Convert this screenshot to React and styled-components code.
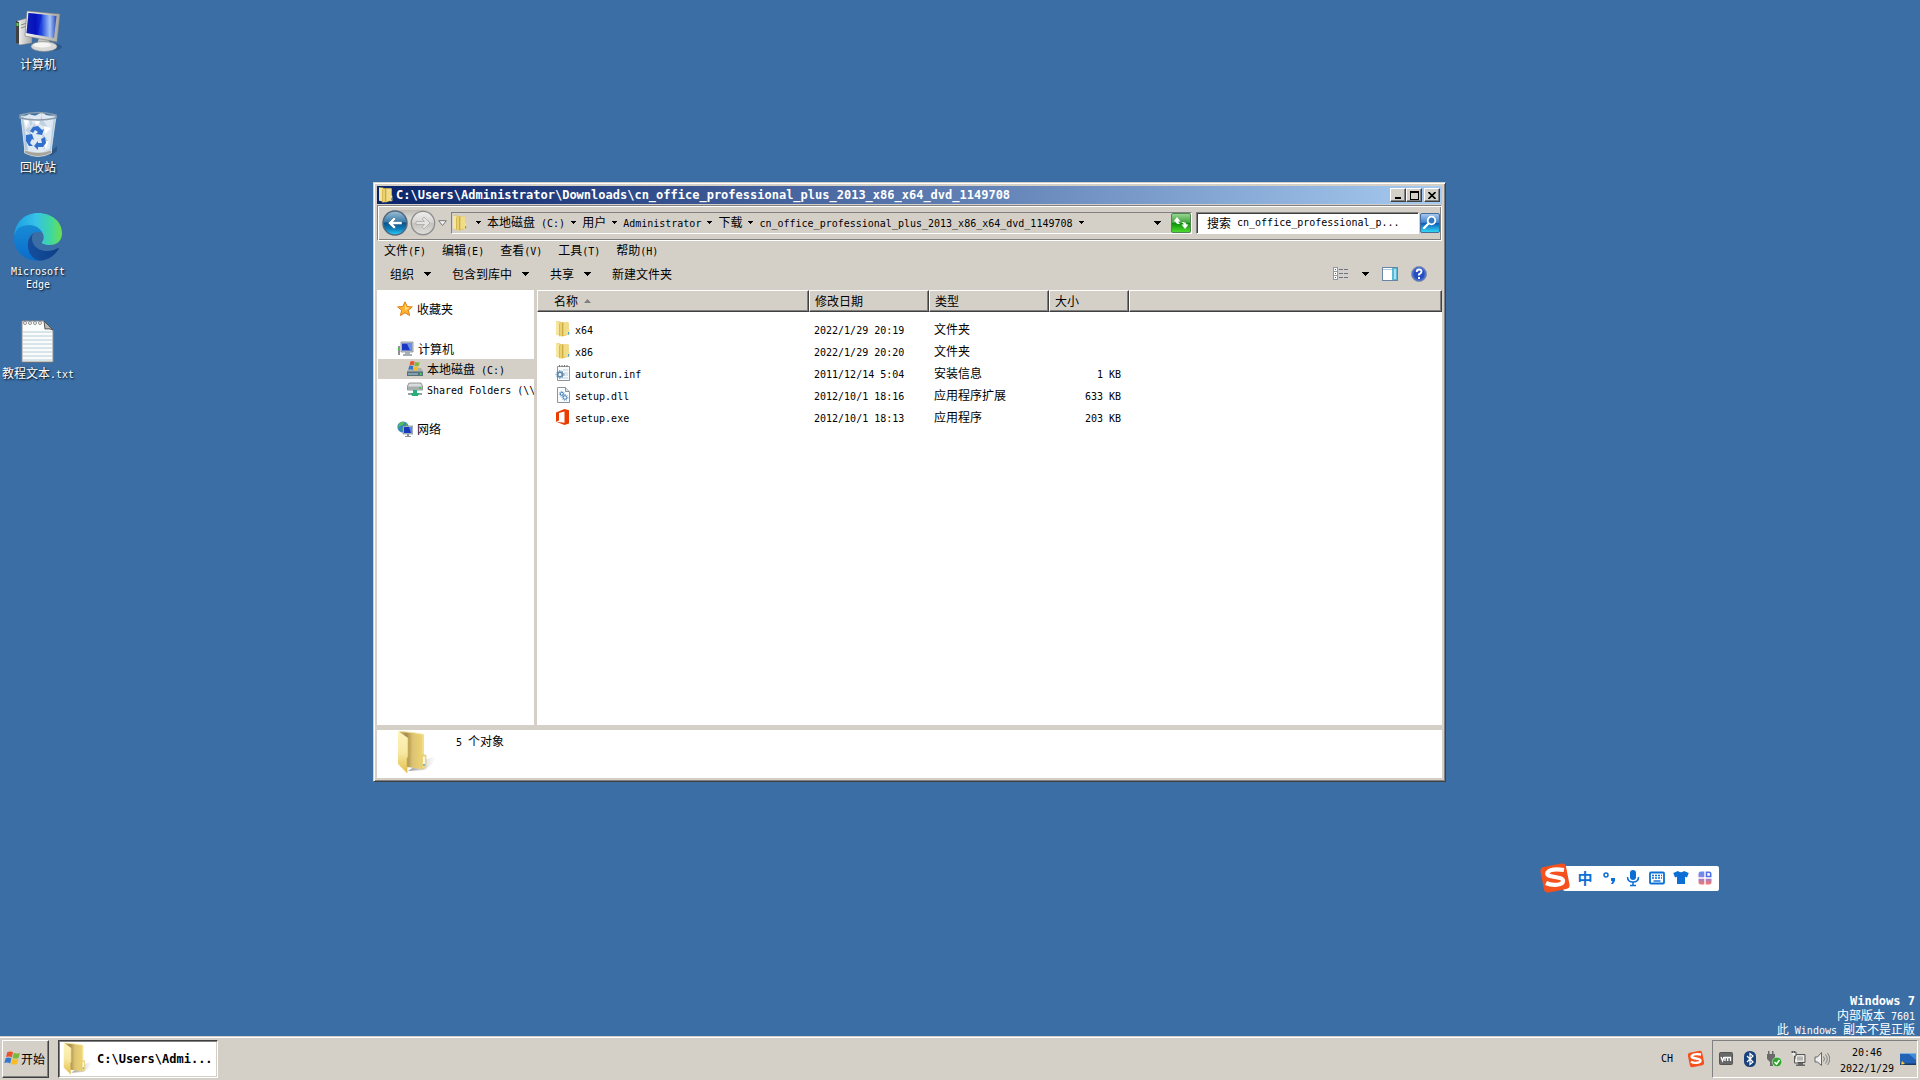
import React from "react";
import styled, { createGlobalStyle, css } from "styled-components";

const face = "#d4d0c8";
const cjk = '"Noto Sans CJK SC", sans-serif';
const mono = '"DejaVu Sans Mono", "Noto Sans CJK SC", monospace';

const Global = createGlobalStyle`
  * { box-sizing: border-box; }
  body { margin: 0; background: #3a6ea5; font: 12px/16px ${cjk}; color: #000; }
  button, input { font: inherit; color: inherit; margin: 0; padding: 0; border: 0; background: none; border-radius: 0; }
  a { color: inherit; text-decoration: none; }
  svg { display: block; flex: none; }
`;

const raised = css`
  border: 1px solid;
  border-color: #fff #404040 #404040 #fff;
  box-shadow: inset -1px -1px #808080;
`;

/* ---------- text ---------- */
const Latin = styled.span`
  font-family: ${mono};
  font-size: 10px;
  line-height: 0;
  white-space: pre;
`;

function Text({ children }) {
  return (
    <span>
      {children
        .split(/([\u2e80-\u9fff]+)/)
        .filter(Boolean)
        .map((run, i) => (/[\u2e80-\u9fff]/.test(run) ? run : <Latin key={i}>{run}</Latin>))}
    </span>
  );
}

/* ---------- layout ---------- */
const Screen = styled.div`
  min-height: 100vh;
  display: grid;
  grid-template-rows: 1fr auto;
`;
const Desktop = styled.main`
  position: relative;
  overflow: hidden;
`;
const Shortcuts = styled.nav`
  display: flex;
  flex-direction: column;
  align-items: flex-start;
`;
const Shortcut = styled.a`
  width: 76px;
  height: 103px;
  padding-top: 7px;
  display: flex;
  flex-direction: column;
  align-items: center;
  gap: 2px;
  color: #fff;
  line-height: 13px;
  text-align: center;
  text-shadow: 1px 1px 2px #000;
  span { white-space: nowrap; }
`;

const Window = styled.section`
  position: absolute;
  left: 373px;
  top: 182px;
  width: 1073px;
  height: 600px;
  padding: 3px;
  background: ${face};
  border: 1px solid;
  border-color: ${face} #404040 #404040 ${face};
  box-shadow: inset 1px 1px #fff, inset -1px -1px #808080;
  display: flex;
  flex-direction: column;
`;
const TitleBar = styled.header`
  height: 18px;
  padding: 0 2px 0 1px;
  display: flex;
  align-items: center;
  gap: 2px;
  flex: none;
  color: #fff;
  background: linear-gradient(to right, #0a246a, #a6caf0);
  h1 {
    flex: 1;
    margin: 0;
    font: bold 12px/16px ${mono};
    white-space: nowrap;
    overflow: hidden;
  }
`;
const CaptionGroup = styled.div`
  display: flex;
`;
const CaptionButton = styled.button`
  width: 16px;
  height: 14px;
  background: ${face};
  display: grid;
  place-items: center;
  ${raised}
`;
const AddressBar = styled.div`
  height: 36px;
  margin-top: 1px;
  padding: 0 1px 0 4px;
  flex: none;
  display: flex;
  align-items: center;
  border: 1px solid;
  border-color: #808080 #fff #fff #808080;
  box-shadow: inset 1px 1px #fff, inset -1px -1px #808080;
`;
const NavButtons = styled.div`
  width: 69px;
  display: flex;
  align-items: center;
  gap: 2px;
`;
const NavPair = styled.div`
  display: flex;
  gap: 2px;
  border-radius: 13px;
  background: linear-gradient(#bdbab4, #dad8d3 30%, #cfccc5);
`;
const Field = styled.div`
  height: 22px;
  display: flex;
  align-items: center;
  border: 1px solid;
  border-color: #808080 #fff #fff #808080;
`;
const PathField = styled(Field)`
  flex: 1;
`;
const Crumbs = styled.nav`
  flex: 1;
  display: flex;
  align-items: center;
  gap: 6px;
  padding: 0 0 2px 8px;
  white-space: nowrap;
`;
const SearchField = styled(Field)`
  width: 223px;
  margin: 0 1px 0 4px;
  padding-left: 10px;
  gap: 6px;
  background: #fff;
  box-shadow: inset 1px 1px #404040;
  label { flex: none; }
  input { flex: 1; min-width: 0; font: 10px/16px ${mono}; outline: none; }
`;
const MenuBar = styled.nav`
  height: 18px;
  padding: 0 7px;
  flex: none;
  display: flex;
  align-items: center;
  gap: 16px;
`;
const CommandBar = styled.div`
  height: 31px;
  padding: 0 15px 2px 13px;
  flex: none;
  display: flex;
  align-items: center;
  gap: 21px;
`;
const Command = styled.button`
  display: flex;
  align-items: center;
  gap: 10px;
`;
const ViewTools = styled.div`
  margin-left: auto;
  display: flex;
  align-items: center;
  gap: 13px;
`;
const Panes = styled.div`
  flex: 1;
  min-height: 0;
  display: grid;
  grid-template-columns: 157px 1fr;
  gap: 3px;
`;
const Tree = styled.nav`
  background: #fff;
  padding: 9px 0 0 1px;
  overflow: hidden;
`;
const TreeGroup = styled.div`
  margin-bottom: 20px;
`;
const TreeItem = styled.a`
  height: 20px;
  padding-left: ${(p) => (p.$child ? 29 : 19)}px;
  display: flex;
  align-items: center;
  gap: 4px;
  white-space: nowrap;
  background: ${(p) => (p.$selected ? face : "transparent")};
`;
const ListPane = styled.div`
  background: #fff;
  overflow: hidden;
`;
const Files = styled.table`
  width: 100%;
  table-layout: fixed;
  border-collapse: separate;
  border-spacing: 0;
  th, td { padding: 0; text-align: left; font-weight: normal; }
  tbody::before { content: ""; display: block; height: 6px; }
  td { height: 22px; padding-left: 5px; }
  td:first-child { padding-left: 18px; }
  td:nth-child(4) { text-align: right; padding: 0 8px 0 0; }
`;
const HeadButton = styled.button`
  width: 100%;
  height: 22px;
  padding-left: ${(p) => (p.$first ? 16 : 5)}px;
  display: flex;
  align-items: center;
  gap: 6px;
  background: ${face};
  ${raised}
`;
const FileName = styled.div`
  display: flex;
  align-items: center;
  gap: 4px;
`;
const Details = styled.footer`
  height: 48px;
  margin-top: 5px;
  padding-left: 20px;
  flex: none;
  display: flex;
  gap: 19px;
  background: #fff;
  p { margin: 3px 0; }
`;

const Ime = styled.div`
  position: absolute;
  left: 1539px;
  top: 862px;
  height: 32px;
  display: flex;
  align-items: center;
`;
const ImeBar = styled.div`
  height: 25px;
  margin-left: -8px;
  padding: 0 2px 0 10px;
  display: flex;
  align-items: center;
  background: #fff;
  border-radius: 2px;
  button { width: 24px; display: grid; place-items: center; color: #0b6fd6; font: bold 15px/20px ${cjk}; }
`;
const ImeLogo = styled.div`
  z-index: 1;
`;
const Watermark = styled.div`
  position: absolute;
  right: 5px;
  bottom: 0;
  color: #fff;
  text-align: right;
  line-height: 14px;
  p { margin: 0; }
  strong { display: block; font: bold 12px/14px ${mono}; }
`;

const Taskbar = styled.footer`
  height: 44px;
  padding: 2px;
  display: flex;
  align-items: center;
  background: ${face};
  border-top: 1px solid ${face};
  box-shadow: inset 0 1px #fff;
`;
const StartButton = styled.button`
  width: 47px;
  height: 38px;
  padding-left: 1px;
  display: flex;
  align-items: center;
  ${raised}
`;
const TaskButton = styled.button`
  width: 160px;
  height: 38px;
  margin-left: 9px;
  padding-left: 4px;
  display: flex;
  align-items: center;
  gap: 4px;
  background: #fff;
  border: 1px solid;
  border-color: #404040 #fff #fff #404040;
  box-shadow: inset 1px 1px #808080, inset -1px -1px ${face};
  font: bold 12px/16px ${mono};
`;
const Language = styled.div`
  margin-left: auto;
  padding-right: 7px;
  display: flex;
  align-items: center;
  gap: 14px;
`;
const Tray = styled.div`
  width: 206px;
  height: 38px;
  padding: 0 1px 0 5px;
  display: flex;
  align-items: center;
  gap: 8px;
  border: 1px solid;
  border-color: #808080 #fff #fff #808080;
`;
const Clock = styled.time`
  flex: 1;
  text-align: center;
  line-height: 16px;
  white-space: nowrap;
  margin: 0 -6px 0 -2px;
`;

/* ---------- drawings ---------- */
const Arrow = ({ w = 7 }) => (
  <svg width={w} height={w === 7 ? 4 : 3} viewBox={`0 0 ${w} ${(w + 1) / 2}`} shapeRendering="crispEdges">
    <path d={`M0 0H${w}L${w / 2} ${(w + 1) / 2}Z`} />
  </svg>
);

const SmallFolder = () => (
  <svg width="16" height="16" viewBox="0 0 16 16">
    <path d="M1 .5h4l1 1h7.500v12l-6 2L1 13.500z" fill="#ddbb48" />
    <path d="M8 1.500h5.500v11.800L8 14.500z" fill="#f2dc86" />
    <path d="M1 .5l4 1v13L1 13.500z" fill="#f7e69d" />
    <path d="M4.500 2.500l3-1.500v13l-3 2z" fill="#ecd26c" />
    <path d="M7.800 1.500v13" stroke="#b8973b" strokeWidth=".8" />
    <path d="M4.500 2.500v12" stroke="#caa844" strokeWidth=".7" />
    <path d="M12.300 8.500h2V14l-2 .5z" fill="#f5df8c" />
    <path d="M13 11h1.200v2.500H13z" fill="#4aa3d8" />
  </svg>
);

const BigFolder = ({ w = 40, h = 44 }) => (
  <svg width={w} height={h} viewBox="0 0 40 44">
    <defs>
      <linearGradient id="bfFront" x1="0" y1="0" x2="0" y2="1">
        <stop offset="0" stopColor="#fff3bd" /><stop offset=".5" stopColor="#f8e9a4" /><stop offset="1" stopColor="#e3bf4b" />
      </linearGradient>
      <linearGradient id="bfBack" x1="0" x2="1">
        <stop offset="0" stopColor="#c7b06a" /><stop offset=".3" stopColor="#a88e49" /><stop offset=".55" stopColor="#dcc374" /><stop offset="1" stopColor="#f1d76f" />
      </linearGradient>
      <linearGradient id="bfShadow"><stop offset="0" stopColor="#777" stopOpacity=".75" /><stop offset="1" stopColor="#aaa" stopOpacity="0" /></linearGradient>
    </defs>
    <path d="M27 30l12-4-4 8-7 6-17 1z" fill="url(#bfShadow)" />
    <path d="M2 1l24 3q1 0 1 1v33l-3 1-14-2z" fill="url(#bfBack)" />
    <path d="M2 1.500l14 1 10 2v22" stroke="#f6e7a2" fill="none" />
    <path d="M1 1l10 7v19l-1 1v15L1 34z" fill="url(#bfFront)" />
    <path d="M11 8v19l-1 1v15" stroke="#d9b94f" fill="none" strokeWidth=".7" />
    <path d="M25 25h4v12l-4 2z" fill="#f5df8c" stroke="#d9bd5e" strokeWidth=".6" />
    <path d="M26.300 27h1.400v7h-1.400z" fill="#fff" /><path d="M26.300 34h1.400v2h-1.400z" fill="#4aa3d8" />
  </svg>
);

const Computer = () => (
  <svg width="48" height="48" viewBox="0 0 48 48">
    <defs>
      <linearGradient id="scr" x1="0" x2="1"><stop offset="0" stopColor="#1230a8" /><stop offset=".3" stopColor="#0510c8" /><stop offset=".5" stopColor="#2048dc" /><stop offset=".78" stopColor="#a6c5f5" /><stop offset="1" stopColor="#2544bd" /></linearGradient>
      <linearGradient id="metal" x1="0" x2="1"><stop offset="0" stopColor="#f5f5f5" /><stop offset="1" stopColor="#a8a8a4" /></linearGradient>
    </defs>
    <ellipse cx="36" cy="40" rx="12" ry="4" fill="#1d3f66" opacity=".45" />
    <path d="M3 14l10-3 5 2v23L6 38l-3-2z" fill="url(#metal)" stroke="#777" strokeWidth=".5" />
    <path d="M2 14l3 1v22l-3-1z" fill="#404040" /><path d="M2.500 16h2v3h-2z" fill="#47dd43" />
    <path d="M7 18l6-2M7 21l6-2" stroke="#777" strokeWidth=".8" />
    <path d="M25 31h9l2 6H23z" fill="#c5c5c3" />
    <ellipse cx="30" cy="39.500" rx="13" ry="5" fill="#d9d9d7" stroke="#8a8a8a" strokeWidth=".6" />
    <ellipse cx="28" cy="38" rx="9" ry="2.500" fill="#f5f5f3" />
    <path d="M13 4l33 3-3 28-32-6z" fill="url(#metal)" stroke="#777" strokeWidth=".6" />
    <path d="M14.500 6l28 3-2.500 22-27.500-5z" fill="url(#scr)" />
    <path d="M14.500 6l14 1.500-5 20.500-11-2z" fill="#0812bb" opacity=".45" />
  </svg>
);

const Bin = () => (
  <svg width="48" height="48" viewBox="0 0 48 48">
    <path d="M35 43l8-7v5l-6 5z" fill="#23486f" opacity=".6" />
    <path d="M7 6l4 36q13 8 26 0L42 6z" fill="#bfd3e4" fillOpacity=".9" stroke="#e5ecf2" strokeWidth=".8" />
    <path d="M9 8l6-4 6 2 7-4 4 3 8 2-2 14-2 18-9 4-13-2-2-14z" fill="#dfe9f3" />
    <path d="M15 6l4 8-8 6 6 5zM28 4l-3 10 10 5-7-10zM28 23l7 9-5 8zM22 12l-6 7 9-1z" fill="#b9cbdc" opacity=".8" />
    <path d="M20 8l6 4-4 4zM30 16l7 2-6 6zM28 32l7-1-3 8zM10 10l5 1-3 6z" fill="#fff" />
    <path d="M10.500 40v3q13.500 7 27 0v-3q-13 5-27 0z" fill="#a4a39c" stroke="#eee" strokeWidth=".6" />
    <path d="M6 5q18-5 36 0v3q-18 4-36 0z" fill="none" stroke="#8b9ba9" strokeWidth="1.500" />
    <g fill="#316fcf"><path d="M16 21l3-4 5-1 4 4 2-1-2 6-6-1 2-2-3-2-2 3z" /><path d="M12 25l6-1 2 6-2-1-2 4 3 3h-4l-3-5z" /><path d="M20 36l4-5v2h4l-1-4 4-2 1 6-3 4h-5v3z" /></g>
  </svg>
);

const Edge = () => (
  <svg width="48" height="48" viewBox="0 0 48 48">
    <defs>
      <linearGradient id="edA" x1="0" x2="1"><stop offset="0" stopColor="#1b9de2" /><stop offset=".45" stopColor="#35c1e8" /><stop offset=".75" stopColor="#3ed6a6" /><stop offset="1" stopColor="#6be04c" /></linearGradient>
      <linearGradient id="edB" x1="0" y1="0" x2="0" y2="1"><stop offset="0" stopColor="#178bd6" /><stop offset="1" stopColor="#0b6cc9" /></linearGradient>
      <linearGradient id="edC" x1="0" x2="1"><stop offset="0" stopColor="#154f9f" /><stop offset="1" stopColor="#0d3f86" /></linearGradient>
    </defs>
    <path d="M0 23C1 9 11 0 24 0c14 0 24 9 24 20 0 8-5 12-12 12-6 0-9-2-8-3 3-3 2-9-2-12C18 10 4 13 0 23z" fill="url(#edA)" />
    <path d="M0 25C1 15 8 12 15 12c7 0 12 4 13 8-7-4-15 2-14 11 1 9 9 15 17 16C13 51-1 39 0 25z" fill="url(#edB)" />
    <path d="M20 20c-4 4-2 12 3 15 7 5 16 3 21 0 1 0 1 1 0 2-5 8-15 12-21 10C13 43 10 27 20 20z" fill="url(#edC)" />
  </svg>
);

const TextFile = () => (
  <svg width="48" height="48" viewBox="0 0 48 48">
    <path d="M9 6h22l8 9v32H9z" fill="#353535" opacity=".5" />
    <path d="M8 5h22l9 9v32H8z" fill="#fafbfb" stroke="#8b8b8b" />
    <path d="M30 5l9 9q-4-2-8-1z" fill="#b9b9b9" stroke="#555" />
    <path d="M9 16h29M9 20h29M9 24h29M9 28h29M9 32h29M9 36h29M9 40h29M9 44h29" stroke="#b7ced8" />
    {[11, 16, 21, 26].map((x) => <circle key={x} cx={x} cy="7" r="1.500" fill="#fff" stroke="#777" strokeWidth=".8" />)}
  </svg>
);

const FlagPanes = () => (
  <>
    <path d="M3 2q3-1.500 5.500.2L7.300 7Q5 5.500 2 6.700z" fill="#e8522d" />
    <path d="M9.300 2.700Q12 4 15 2.500l-1.300 5Q11 8.700 8 7.200z" fill="#7bb83b" />
    <path d="M1.700 7.500q2.900-1.200 5.300.4l-1.200 4.800q-2.500-1.700-5.500-.5z" fill="#3278d0" />
    <path d="M7.800 8q2.700 1.500 5.700.3l-1.300 4.900q-2.900 1.200-5.500-.3z" fill="#f6bd28" />
  </>
);
const WindowsFlag = () => <svg width="17" height="17" viewBox="0 0 16 16"><FlagPanes /></svg>;

const Star = () => (
  <svg width="16" height="16" viewBox="0 0 16 16">
    <path d="M8 .8l2.100 4.700 5.200.4-4 3.400 1.300 5.200L8 11.800l-4.600 2.700 1.300-5.200-4-3.400 5.200-.4z" fill="#ffb52f" stroke="#e07b14" />
    <path d="M8 3l1.300 3.500 3.500.2L8 9z" fill="#ffe49a" />
  </svg>
);

const SmallPc = () => (
  <svg width="17" height="16" viewBox="0 0 17 16">
    <path d="M1 5h2v9H1z" fill="#8b9197" /><path d="M1 7h1v2H1z" fill="#48cf47" />
    <path d="M4 1h12v10H4z" fill="#c9ced4" stroke="#777e86" strokeWidth=".7" />
    <path d="M5 2.500h10v7H5z" fill="#1936c5" /><path d="M10 2.500h5v7h-2z" fill="#6a91e7" />
    <path d="M8 11h5v2h2v2H6v-2h2z" fill="#a9aeb3" />
  </svg>
);

const Drive = () => (
  <svg width="16" height="16" viewBox="0 0 16 16">
    <path d="M2 7h12l2 3.500v4H0v-4z" fill="#a9b1b6" /><path d="M0 10.500h16V15H0z" fill="#56707c" /><path d="M1 12h10v2H1z" fill="#82a0ad" /><path d="M13 12h1.500v2H13z" fill="#50db58" />
    <g transform="translate(1 -1) scale(.78)"><FlagPanes /></g>
  </svg>
);

const NetDrive = () => (
  <svg width="16" height="16" viewBox="0 0 16 16">
    <path d="M2 2h12l1.500 3v4H.5V5z" fill="#d8dbdc" stroke="#7d8285" strokeWidth=".8" /><path d="M1 5.500h14V9H1z" fill="#a7acaf" /><path d="M12 6h2v2h-2z" fill="#49c94f" />
    <path d="M7 9h2v3h6v2H1v-2h6z" fill="#8fa3a5" /><path d="M6 9h4v3h2l-1 3H5l-1-3h2z" fill="#25b078" />
  </svg>
);

const Globe = () => (
  <svg width="16" height="16" viewBox="0 0 16 16">
    <circle cx="6" cy="6" r="5.600" fill="#2d87c9" /><path d="M2 2.500Q5 0 8 1L6 4 3 5 1 8zM5 7l3 1v3H6zM9 2l2 3-2 1z" fill="#59bd51" />
    <path d="M6 5h10v8H6z" fill="#c2cad3" stroke="#66717c" strokeWidth=".6" /><path d="M7 6h8v6H7z" fill="#1939bd" /><path d="M12 6h3v6h-1z" fill="#5c87de" /><path d="M10 13h2v2h-2zM8 15h6v1H8z" fill="#89929b" />
  </svg>
);

const InfFile = () => (
  <svg width="16" height="16" viewBox="0 0 16 16">
    <path d="M2.500 1.500h12v14h-12z" fill="#f8fafb" stroke="#8c949b" /><path d="M4 1h10" stroke="#777" strokeDasharray="1 1.500" strokeWidth="2" />
    <path d="M8 5h5M9 8h4M9 10h4M8 13h5" stroke="#bfd0da" />
    <circle cx="5" cy="9.500" r="2.400" fill="none" stroke="#5e89ae" strokeWidth="1.800" /><circle cx="5" cy="9.500" r="3.900" fill="none" stroke="#5e89ae" strokeDasharray="1.400 1.400" />
  </svg>
);

const DllFile = () => (
  <svg width="16" height="16" viewBox="0 0 16 16">
    <path d="M2.500.5h8l4 4v11h-12z" fill="#fafcfd" stroke="#8c949b" /><path d="M10.500.5v4h4" fill="#dce1e4" stroke="#8c949b" />
    <circle cx="6.800" cy="6.800" r="1.500" fill="none" stroke="#3978b8" /><circle cx="10" cy="10.500" r="1.800" fill="none" stroke="#3978b8" />
    <circle cx="6.800" cy="6.800" r="2.500" fill="none" stroke="#3978b8" strokeDasharray="1 1.200" strokeWidth=".8" /><circle cx="10" cy="10.500" r="2.900" fill="none" stroke="#3978b8" strokeDasharray="1 1.200" strokeWidth=".8" />
  </svg>
);

const Office = () => (
  <svg width="16" height="16" viewBox="0 0 16 16">
    <path d="M1 3.500L9.500 0 14 1.200v13.400L9.500 16 1 12.800l8.500 1V2.500L4 4v7.500l-3 1.300z" fill="#eb3c00" />
  </svg>
);

const BackIcon = () => (
  <svg width="26" height="26" viewBox="0 0 26 26">
    <defs><linearGradient id="bk" x1="0" y1="0" x2="0" y2="1"><stop offset="0" stopColor="#9fc0d6" /><stop offset=".45" stopColor="#3a7cab" /><stop offset=".5" stopColor="#0d5288" /><stop offset=".75" stopColor="#0e7fba" /><stop offset="1" stopColor="#2bd2ff" /></linearGradient></defs>
    <circle cx="13" cy="13" r="12" fill="url(#bk)" stroke="#54677c" strokeWidth="1.500" />
    <path d="M6 13l6-6 2 2-2.500 2.500H20v3h-8.500L14 17l-2 2z" fill="#fff" stroke="#27567f" strokeWidth=".5" />
  </svg>
);
const ForwardIcon = () => (
  <svg width="26" height="26" viewBox="0 0 26 26">
    <defs><linearGradient id="fw" x1="0" y1="0" x2="0" y2="1"><stop offset="0" stopColor="#f0f0ee" /><stop offset=".48" stopColor="#d4d3d0" /><stop offset=".5" stopColor="#c2c1be" /><stop offset="1" stopColor="#e2e1dd" /></linearGradient></defs>
    <circle cx="13" cy="13" r="11.700" fill="url(#fw)" stroke="#8c8c8c" strokeWidth="1.300" />
    <path d="M20 13l-6-6-2 2 2.500 2.500H6v3h8.500L12 17l2 2z" fill="#e3e3e1" stroke="#aaaaa8" strokeWidth=".8" />
  </svg>
);
const HistoryIcon = () => (
  <svg width="9" height="7" viewBox="0 0 9 7"><path d="M.7.700h7.600L4.500 5.500z" fill="#f4f4f4" stroke="#777" /></svg>
);
const RefreshIcon = () => (
  <svg width="20" height="20" viewBox="0 0 20 20">
    <defs><linearGradient id="gr" x1="0" y1="0" x2="0" y2="1"><stop offset="0" stopColor="#9bd895" /><stop offset=".48" stopColor="#41a23e" /><stop offset=".5" stopColor="#078e08" /><stop offset="1" stopColor="#52de31" /></linearGradient></defs>
    <rect x=".5" y=".5" width="19" height="19" rx="1.500" fill="url(#gr)" stroke="#4d8850" />
    <path d="M2.500 8.500L6 4l3.500 4.500H7.300q0 1.500 2.200 2.500-4.500.5-5-2.500z" fill="#fff" /><path d="M17.500 11.500L14 16l-3.500-4.500h2.200q0-1.500-2.200-2.500 4.500-.5 5 2.500z" fill="#fff" />
  </svg>
);
const SearchIcon = () => (
  <svg width="20" height="20" viewBox="0 0 20 20">
    <defs><linearGradient id="se" x1="0" y1="0" x2="0" y2="1"><stop offset="0" stopColor="#aecbed" /><stop offset=".48" stopColor="#3f83cf" /><stop offset=".5" stopColor="#095bb5" /><stop offset="1" stopColor="#35ddf9" /></linearGradient></defs>
    <rect x=".5" y=".5" width="19" height="19" rx="1.500" fill="url(#se)" stroke="#446c9d" />
    <circle cx="11.500" cy="7.500" r="3.800" fill="#317ac3" stroke="#fff" strokeWidth="1.800" /><path d="M8.500 10.500L4 15" stroke="#fff" strokeWidth="2.400" strokeLinecap="round" />
  </svg>
);
const ViewIcon = () => (
  <svg width="16" height="14" viewBox="0 0 16 14" shapeRendering="crispEdges">
    {[0, 4, 8].map((y, i) => (
      <g key={y}><rect x=".5" y={y + 0.5} width="4" height="4" fill="#fff" stroke="#8d9aaa" /><path d={`M2 ${y + 2}h1v1H2z`} fill={i === 1 ? "#c33" : "#375e92"} /><path d={`M6 ${y + 2}h4v1H6zM11 ${y + 2}h4v1h-4z`} fill="#66758a" /></g>
    ))}
  </svg>
);
const PreviewIcon = () => (
  <svg width="16" height="14" viewBox="0 0 16 14">
    <rect x=".5" y=".5" width="15" height="13" fill="#fff" stroke="#6786a3" /><path d="M1 2.500h9" stroke="#b8cbdc" /><path d="M10 1h5v12h-5z" fill="#5bb8d4" /><path d="M12 2h2v10h-2z" fill="#a8e1ef" />
  </svg>
);
const HelpIcon = () => (
  <svg width="16" height="16" viewBox="0 0 16 16">
    <circle cx="8" cy="8" r="7.500" fill="#254fc0" stroke="#8b95a6" /><circle cx="8" cy="8" r="6.300" fill="none" stroke="#7897de" strokeWidth=".7" />
    <path d="M5.700 6q0-2.500 2.400-2.500T10.500 5.700Q10.500 7 8 8.300v1.200" fill="none" stroke="#fff" strokeWidth="1.900" /><path d="M7 11h2v2H7z" fill="#fff" />
  </svg>
);

const SogouLogo = ({ size = 32 }) => (
  <svg width={size} height={size} viewBox="0 0 32 32">
    <rect x="3" y="3" width="26" height="26" rx="4" fill="#f4511e" transform="rotate(-11 16 16)" />
    <path d="M25 8Q12 6 8.500 10.500C5.500 16 23.500 14 24 18.500c.5 5-11 5.500-17 2.500" fill="none" stroke="#fff" strokeWidth="4.200" />
  </svg>
);
const PunctIcon = () => <svg width="16" height="16" viewBox="0 0 16 16"><circle cx="5" cy="5" r="2" fill="none" stroke="#0b6fd6" strokeWidth="1.500" /><path d="M10 8h4v3l-2 3h-2l1.500-3H10z" fill="#0b6fd6" /></svg>;
const MicIcon = () => <svg width="16" height="18" viewBox="0 0 16 18"><rect x="5" y="1" width="6" height="10" rx="3" fill="#0b6fd6" /><path d="M2.500 8q0 5 5.500 5t5.500-5M8 13v3M5 16.500h6" fill="none" stroke="#0b6fd6" strokeWidth="1.500" /></svg>;
const KeyboardIcon = () => <svg width="16" height="14" viewBox="0 0 16 14"><rect x="1" y="1.500" width="14" height="11" rx="1" fill="#fff" stroke="#0b6fd6" strokeWidth="1.800" /><path d="M3 4.500h10M3 7h10" stroke="#0b6fd6" strokeWidth="1.600" strokeDasharray="2 1" /><path d="M4.500 10h7" stroke="#0b6fd6" strokeWidth="1.400" /></svg>;
const ShirtIcon = () => <svg width="16" height="16" viewBox="0 0 16 16"><path d="M5 1q3 2.500 6 0l4.700 2L14 7.500l-2-.7V14H4V6.800l-2 .7L.3 3z" fill="#0b6fd6" /></svg>;
const GridIcon = () => (
  <svg width="16" height="16" viewBox="0 0 16 16">
    <defs><linearGradient id="gd" gradientUnits="userSpaceOnUse" x1="0" y1="2" x2="0" y2="14"><stop offset="0" stopColor="#4779ef" /><stop offset=".5" stopColor="#8466d3" /><stop offset="1" stopColor="#ed6358" /></linearGradient></defs>
    <path d="M4 1.500h3.300v5.800H1.500V4q0-2.500 2.500-2.500zM1.500 8.700h5.800v5.800H4q-2.500 0-2.500-2.500zM8.700 8.700h5.800V12q0 2.500-2.500 2.500H8.700z" fill="url(#gd)" opacity=".85" /><path d="M9.500 2.300H12q1.700 0 1.700 1.700v2.500H9.500z" fill="none" stroke="#4e6fe8" strokeWidth="1.600" />
  </svg>
);
const VmIcon = () => <svg width="16" height="16" viewBox="0 0 16 16"><rect x="1.500" y="1.500" width="13" height="12" rx="1" fill="#686868" stroke="#555" /><path d="M3 6l1.500 4L6 6M7 10V6.500h5.500V10M9.700 7v3" fill="none" stroke="#fff" strokeWidth="1.300" /></svg>;
const BluetoothIcon = () => <svg width="16" height="16" viewBox="0 0 16 16"><rect x="2" y="0" width="12" height="16" rx="5.500" fill="#19427c" /><path d="M5 5l6 6-3 2.500v-11L11 5l-6 6" fill="none" stroke="#fff" strokeWidth="1.200" /></svg>;
const UsbIcon = () => <svg width="16" height="16" viewBox="0 0 16 16"><path d="M2 0h1.500v3H2zM6 0h1.500v3H6zM1 3h8v5l-2 3v4H4v-4L1 8z" fill="#6a6a6a" /><circle cx="11" cy="11" r="4.800" fill="#2fa52f" stroke="#fff" strokeWidth=".5" /><path d="M8.500 11l2 2 3-4" fill="none" stroke="#fff" strokeWidth="1.500" /></svg>;
const NetIcon = () => <svg width="16" height="16" viewBox="0 0 16 16"><path d="M5 3.500h10v8H5z" fill="#d8d6d0" stroke="#555" /><path d="M6.500 5h7v5h-7z" fill="#b5b5b1" stroke="#fff" strokeWidth=".7" /><path d="M8 12h5v1.500h2V15H6v-1.500h2z" fill="#666" /><path d="M1 1h5v4H4.500v7H8" fill="#eee" stroke="#555" /><path d="M2.500 0v2M4.500 0v2" stroke="#555" /></svg>;
const SoundIcon = () => <svg width="16" height="16" viewBox="0 0 16 16"><path d="M1 6h2.500L7.500 1.500v13L3.500 11H1z" fill="#f0f0ee" stroke="#666" /><path d="M9.500 5.500q2 2.500 0 5M11.500 3.500q3.500 4.500 0 9M13.500 2q4.500 6 0 12" fill="none" stroke="#777" strokeWidth=".9" /></svg>;
const ShowDesktopIcon = () => <svg width="16" height="16" viewBox="0 0 16 16"><path d="M0 2h16v12H0z" fill="#2362b5" /><path d="M0 2h16v1H0z" fill="#7db1e5" /><path d="M9 3h7v6z" fill="#3f8edc" /><path d="M0 12.500h16V14H0z" fill="#18375f" /><path d="M2 10l3 3-4 .5z" fill="#ffc935" /></svg>;

/* ---------- data ---------- */
const shortcuts = [
  [Computer, ["计算机"]],
  [Bin, ["回收站"]],
  [Edge, ["Microsoft", "Edge"]],
  [TextFile, ["教程文本.txt"]],
];
const crumbs = ["本地磁盘 (C:)", "用户", "Administrator", "下载", "cn_office_professional_plus_2013_x86_x64_dvd_1149708"];
const files = [
  [SmallFolder, "x64", "2022/1/29 20:19", "文件夹", ""],
  [SmallFolder, "x86", "2022/1/29 20:20", "文件夹", ""],
  [InfFile, "autorun.inf", "2011/12/14 5:04", "安装信息", "1 KB"],
  [DllFile, "setup.dll", "2012/10/1 18:16", "应用程序扩展", "633 KB"],
  [Office, "setup.exe", "2012/10/1 18:13", "应用程序", "203 KB"],
];

export default function App() {
  return (
    <>
      <Global />
      <Screen>
        <Desktop>
          <Shortcuts>
            {shortcuts.map(([Icon, lines]) => (
              <Shortcut href="#" key={lines[0]}>
                <Icon />
                <div>{lines.map((l) => <div key={l}><Text>{l}</Text></div>)}</div>
              </Shortcut>
            ))}
          </Shortcuts>

          <Window>
            <TitleBar>
              <SmallFolder />
              <h1>C:\Users\Administrator\Downloads\cn_office_professional_plus_2013_x86_x64_dvd_1149708</h1>
              <CaptionGroup>
                <CaptionButton aria-label="最小化"><svg width="8" height="8" viewBox="0 0 8 8"><path d="M1 6h6v2H1z" /></svg></CaptionButton>
                <CaptionButton aria-label="最大化"><svg width="9" height="9" viewBox="0 0 9 9"><path d="M0 0h9v9H0zM1 2v6h7V2z" fillRule="evenodd" /></svg></CaptionButton>
              </CaptionGroup>
              <CaptionButton aria-label="关闭"><svg width="8" height="7" viewBox="0 0 8 7"><path d="M.5 0l7 7M7.500 0l-7 7" stroke="#000" strokeWidth="1.600" /></svg></CaptionButton>
            </TitleBar>

            <AddressBar>
              <NavButtons>
                <NavPair>
                  <button aria-label="后退"><BackIcon /></button>
                  <button aria-label="前进"><ForwardIcon /></button>
                </NavPair>
                <button aria-label="历史记录"><HistoryIcon /></button>
              </NavButtons>
              <PathField>
                <SmallFolder />
                <Crumbs>
                  <Arrow w={5} />
                  {crumbs.map((c) => (
                    <React.Fragment key={c}>
                      <a href="#"><Text>{c}</Text></a>
                      <Arrow w={5} />
                    </React.Fragment>
                  ))}
                </Crumbs>
                <Command aria-label="刷新"><Arrow /><RefreshIcon /></Command>
              </PathField>
              <SearchField>
                <label htmlFor="search">搜索</label>
                <input id="search" defaultValue="cn_office_professional_p..." />
              </SearchField>
              <button aria-label="搜索"><SearchIcon /></button>
            </AddressBar>

            <MenuBar>
              {["文件(F)", "编辑(E)", "查看(V)", "工具(T)", "帮助(H)"].map((m) => <button key={m}><Text>{m}</Text></button>)}
            </MenuBar>
            <CommandBar>
              <Command>组织<Arrow /></Command>
              <Command>包含到库中<Arrow /></Command>
              <Command>共享<Arrow /></Command>
              <Command>新建文件夹</Command>
              <ViewTools>
                <Command aria-label="视图"><ViewIcon /></Command>
                <Command aria-label="更多选项"><Arrow /></Command>
                <Command aria-label="预览窗格"><PreviewIcon /></Command>
                <Command aria-label="帮助"><HelpIcon /></Command>
              </ViewTools>
            </CommandBar>

            <Panes>
              <Tree>
                <TreeGroup><TreeItem href="#"><Star />收藏夹</TreeItem></TreeGroup>
                <TreeGroup>
                  <TreeItem href="#"><SmallPc />计算机</TreeItem>
                  <TreeItem href="#" $child $selected><Drive /><Text>本地磁盘 (C:)</Text></TreeItem>
                  <TreeItem href="#" $child><NetDrive /><Text>{"Shared Folders (\\\\"}</Text></TreeItem>
                </TreeGroup>
                <TreeItem href="#"><Globe />网络</TreeItem>
              </Tree>
              <ListPane>
                <Files>
                  <colgroup><col width="272" /><col width="120" /><col width="120" /><col width="80" /><col /></colgroup>
                  <thead>
                    <tr>
                      <th><HeadButton $first>名称<svg width="7" height="4" viewBox="0 0 7 4"><path d="M0 4h7L3.500 0z" fill="#808080" /></svg></HeadButton></th>
                      <th><HeadButton>修改日期</HeadButton></th>
                      <th><HeadButton>类型</HeadButton></th>
                      <th><HeadButton>大小</HeadButton></th>
                      <th><HeadButton aria-label="其他" /></th>
                    </tr>
                  </thead>
                  <tbody>
                    {files.map(([Icon, name, date, type, size]) => (
                      <tr key={name}>
                        <td><FileName><Icon /><Text>{name}</Text></FileName></td>
                        <td><Text>{date}</Text></td>
                        <td>{type}</td>
                        <td><Text>{size}</Text></td>
                        <td />
                      </tr>
                    ))}
                  </tbody>
                </Files>
              </ListPane>
            </Panes>
            <Details><BigFolder /><p><Text>5 个对象</Text></p></Details>
          </Window>

          <Ime>
            <ImeLogo><SogouLogo /></ImeLogo>
            <ImeBar>
              <button>中</button>
              <button aria-label="标点"><PunctIcon /></button>
              <button aria-label="语音"><MicIcon /></button>
              <button aria-label="键盘"><KeyboardIcon /></button>
              <button aria-label="皮肤"><ShirtIcon /></button>
              <button aria-label="工具箱"><GridIcon /></button>
            </ImeBar>
          </Ime>

          <Watermark>
            <strong>Windows 7</strong>
            <p><Text>内部版本 7601</Text></p>
            <p><Text>此 Windows 副本不是正版</Text></p>
          </Watermark>
        </Desktop>

        <Taskbar>
          <StartButton><WindowsFlag />开始</StartButton>
          <TaskButton><BigFolder w={30} h={33} />C:\Users\Admi...</TaskButton>
          <Language><Latin>CH</Latin><SogouLogo size={18} /></Language>
          <Tray>
            <VmIcon /><BluetoothIcon /><UsbIcon /><NetIcon /><SoundIcon />
            <Clock><Latin>20:46</Latin><br /><Latin>2022/1/29</Latin></Clock>
            <ShowDesktopIcon />
          </Tray>
        </Taskbar>
      </Screen>
    </>
  );
}
